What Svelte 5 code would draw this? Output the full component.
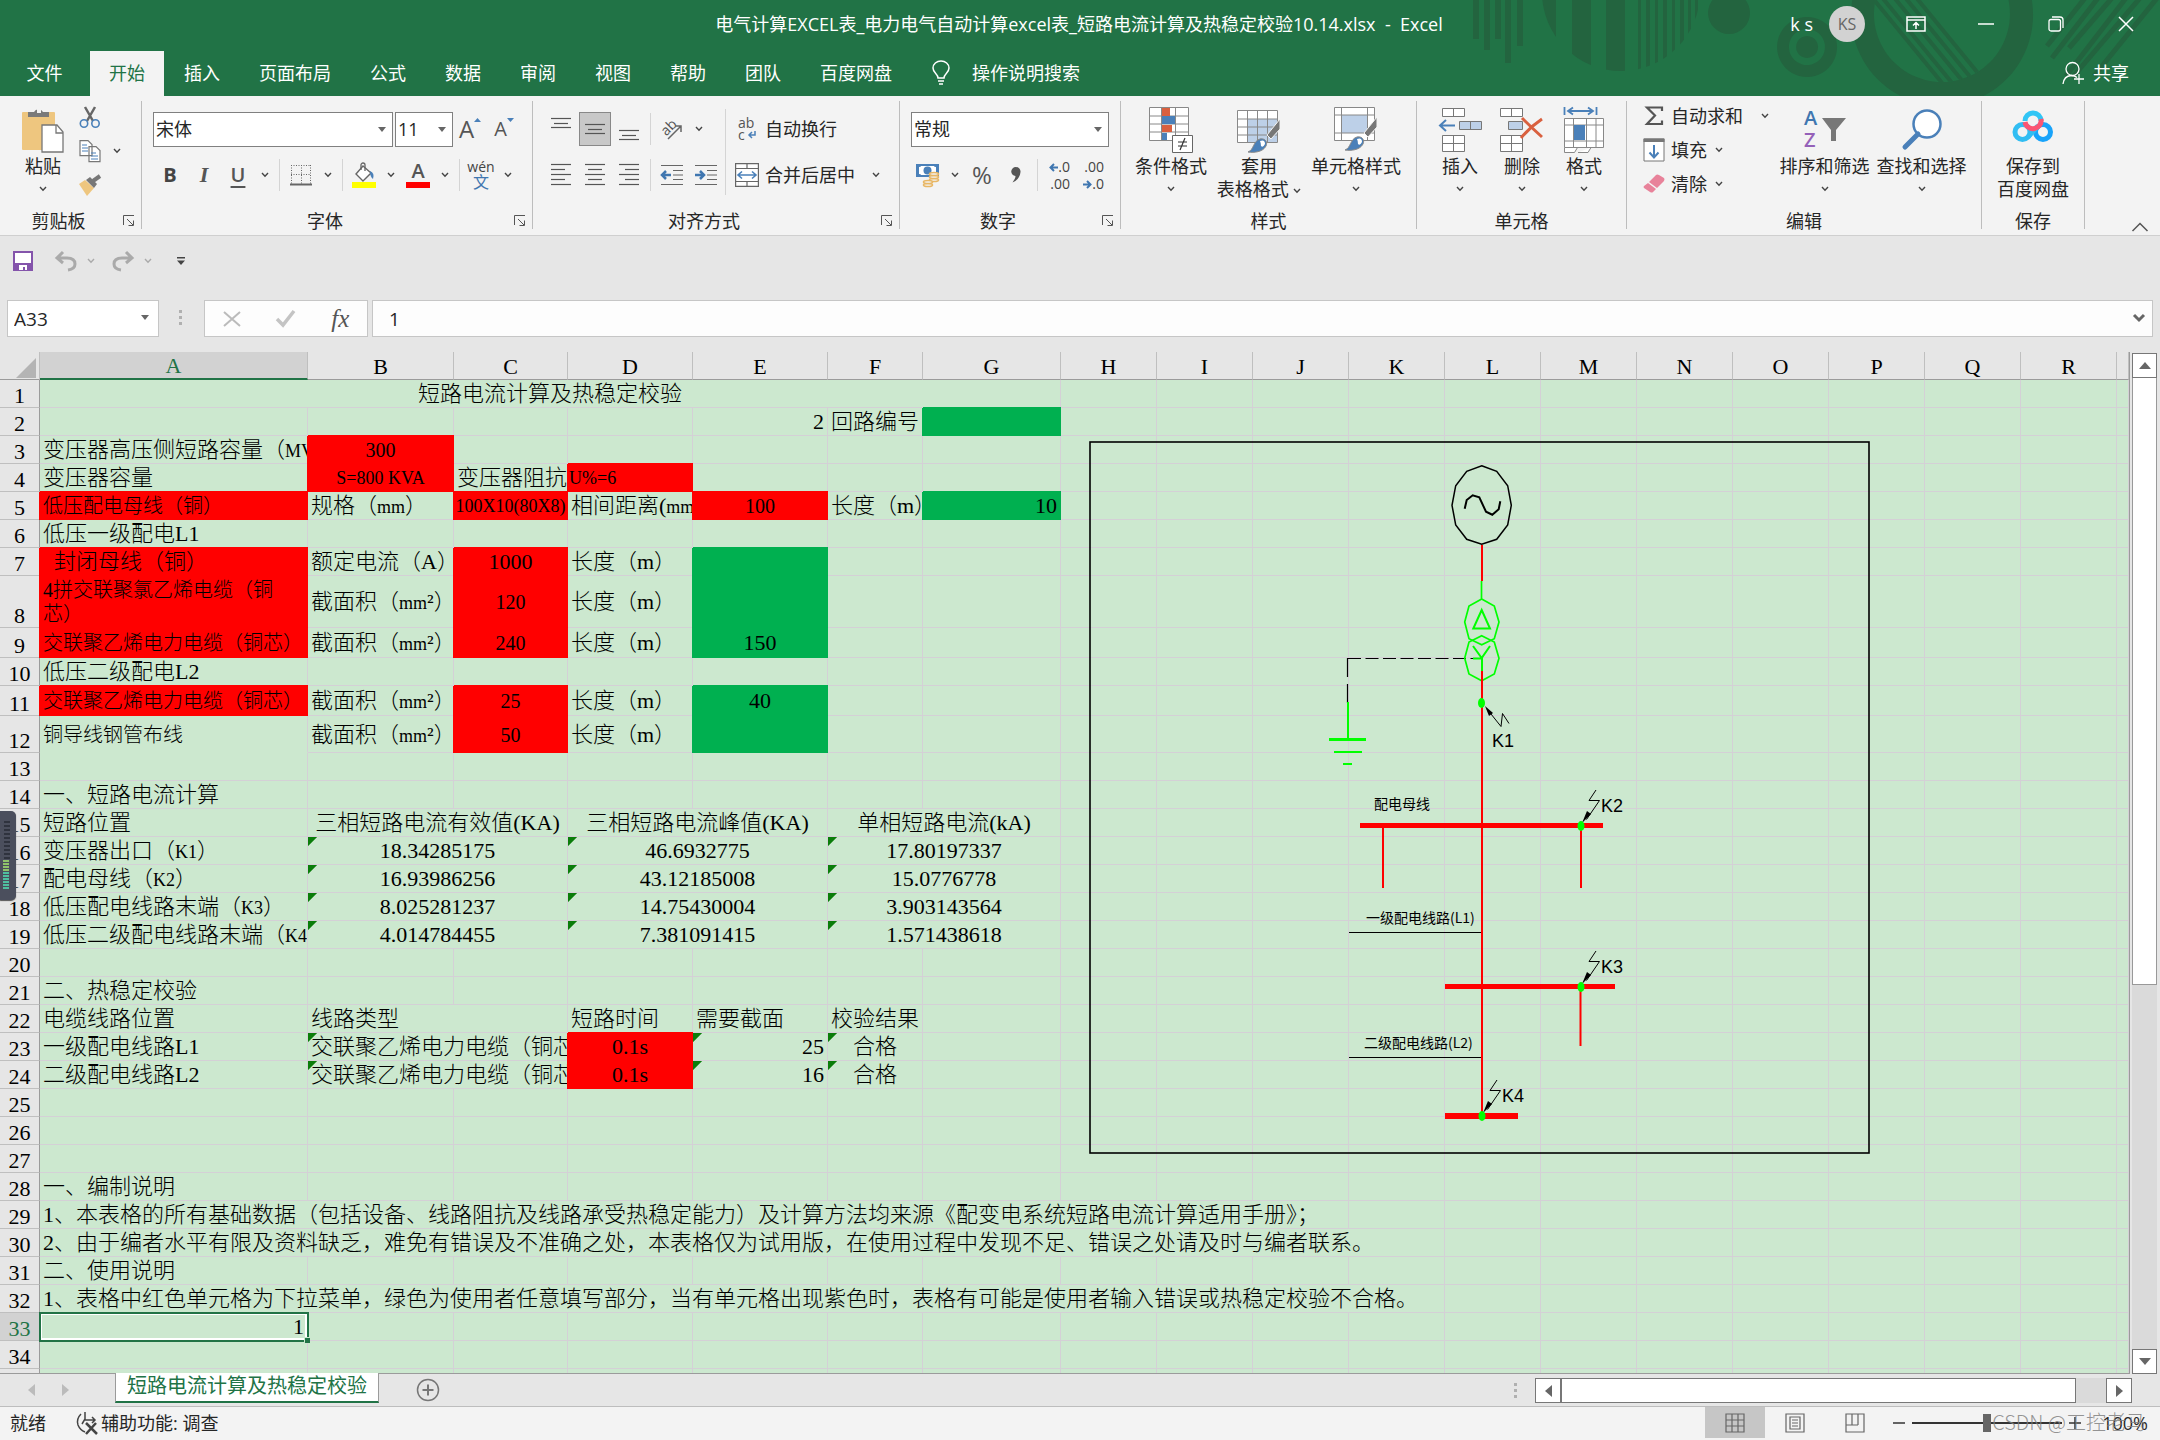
<script>
  const GREEN = 'green';
  const RED = 'red';

  const tabs = ['插入', '页面布局', '公式', '数据', '审阅', '视图', '帮助', '团队', '百度网盘'];
  const columns = [
    ['A', 268], ['B', 146], ['C', 114], ['D', 125], ['E', 135], ['F', 95], ['G', 138],
    ['H', 96], ['I', 96], ['J', 96], ['K', 96], ['L', 96], ['M', 96], ['N', 96],
    ['O', 96], ['P', 96], ['Q', 96], ['R', 96]
  ];
  const tall = { 8: 52, 9: 30, 11: 30, 12: 37 };

  // text, fill, align, span, small, err (green corner), open (no bottom line)
  const cells = {
    A1: { t: '短路电流计算及热稳定校验', span: 7, align: 'center' },
    E2: { t: '2', align: 'right' },
    F2: { t: '回路编号' },
    G2: { fill: GREEN },
    A3: { t: '变压器高压侧短路容量（MVA）' },
    B3: { t: '300', fill: RED, align: 'center', small: true },
    A4: { t: '变压器容量' },
    B4: { t: 'S=800 KVA', fill: RED, align: 'center', fit: true },
    C4: { t: '变压器阻抗' },
    D4: { t: 'U%=6', fill: RED, fit: true, tight: true },
    A5: { t: '低压配电母线（铜）', fill: RED, small: true },
    B5: { t: '规格（mm）' },
    C5: { t: '100X10(80X8)', fill: RED, align: 'center', fit: true, tight: true },
    D5: { t: '相间距离(mm)' },
    E5: { t: '100', fill: RED, align: 'center', small: true },
    F5: { t: '长度（m）' },
    G5: { t: '10', fill: GREEN, align: 'right' },
    A6: { t: '低压一级配电L1' },
    A7: { t: '\u00a0\u00a0封闭母线（铜）', fill: RED },
    B7: { t: '额定电流（A）' },
    C7: { t: '1000', fill: RED, align: 'center' },
    D7: { t: '长度（m）' },
    E7: { fill: GREEN },
    A8: { t: '4拼交联聚氯乙烯电缆（铜芯）', fill: RED, small: true, wrap: true },
    B8: { t: '截面积（mm²）' },
    C8: { t: '120', fill: RED, align: 'center', small: true },
    D8: { t: '长度（m）' },
    E8: { fill: GREEN },
    A9: { t: '交联聚乙烯电力电缆（铜芯）', fill: RED, small: true },
    B9: { t: '截面积（mm²）' },
    C9: { t: '240', fill: RED, align: 'center', small: true },
    D9: { t: '长度（m）' },
    E9: { t: '150', fill: GREEN, align: 'center' },
    A10: { t: '低压二级配电L2' },
    A11: { t: '交联聚乙烯电力电缆（铜芯）', fill: RED, small: true },
    B11: { t: '截面积（mm²）' },
    C11: { t: '25', fill: RED, align: 'center', small: true },
    D11: { t: '长度（m）' },
    E11: { t: '40', fill: GREEN, align: 'center' },
    A12: { t: '铜导线钢管布线', small: true, open: true },
    B12: { t: '截面积（mm²）' },
    C12: { t: '50', fill: RED, align: 'center', small: true },
    D12: { t: '长度（m）' },
    E12: { fill: GREEN },
    A14: { t: '一、短路电流计算' },
    A15: { t: '短路位置' },
    B15: { t: '三相短路电流有效值(KA)', span: 2, align: 'center' },
    D15: { t: '三相短路电流峰值(KA)', span: 2, align: 'center' },
    F15: { t: '单相短路电流(kA)', span: 2, align: 'center' },
    A16: { t: '变压器出口（K1）' },
    B16: { t: '18.34285175', span: 2, align: 'center', err: true },
    D16: { t: '46.6932775', span: 2, align: 'center', err: true },
    F16: { t: '17.80197337', span: 2, align: 'center', err: true },
    A17: { t: '配电母线（K2）' },
    B17: { t: '16.93986256', span: 2, align: 'center', err: true },
    D17: { t: '43.12185008', span: 2, align: 'center', err: true },
    F17: { t: '15.0776778', span: 2, align: 'center', err: true },
    A18: { t: '低压配电线路末端（K3）' },
    B18: { t: '8.025281237', span: 2, align: 'center', err: true },
    D18: { t: '14.75430004', span: 2, align: 'center', err: true },
    F18: { t: '3.903143564', span: 2, align: 'center', err: true },
    A19: { t: '低压二级配电线路末端（K4）' },
    B19: { t: '4.014784455', span: 2, align: 'center', err: true },
    D19: { t: '7.381091415', span: 2, align: 'center', err: true },
    F19: { t: '1.571438618', span: 2, align: 'center', err: true },
    A21: { t: '二、热稳定校验' },
    A22: { t: '电缆线路位置' },
    B22: { t: '线路类型', span: 2 },
    D22: { t: '短路时间' },
    E22: { t: '需要截面' },
    F22: { t: '校验结果' },
    A23: { t: '一级配电线路L1' },
    B23: { t: '交联聚乙烯电力电缆（铜芯）', span: 2, err: true },
    D23: { t: '0.1s', fill: RED, align: 'center' },
    E23: { t: '25', align: 'right', err: true },
    F23: { t: '合格', align: 'center', err: true },
    A24: { t: '二级配电线路L2' },
    B24: { t: '交联聚乙烯电力电缆（铜芯）', span: 2, err: true },
    D24: { t: '0.1s', fill: RED, align: 'center' },
    E24: { t: '16', align: 'right', err: true },
    F24: { t: '合格', align: 'center', err: true },
    A28: { t: '一、编制说明' },
    A29: { t: '1、本表格的所有基础数据（包括设备、线路阻抗及线路承受热稳定能力）及计算方法均来源《配变电系统短路电流计算适用手册》；', span: 10 },
    A30: { t: '2、由于编者水平有限及资料缺乏，难免有错误及不准确之处，本表格仅为试用版，在使用过程中发现不足、错误之处请及时与编者联系。', span: 11 },
    A31: { t: '二、使用说明' },
    A32: { t: '1、表格中红色单元格为下拉菜单，绿色为使用者任意填写部分，当有单元格出现紫色时，表格有可能是使用者输入错误或热稳定校验不合格。', span: 11 },
    A33: { t: '1', align: 'right', selected: true }
  };

  function buildRow(n) {
    const out = [];
    for (let i = 0; i < columns.length; ) {
      const cell = cells[columns[i][0] + n] ?? {};
      out.push(cell);
      i += cell.span ?? 1;
    }
    out.push({});
    return { n, height: tall[n] ?? 28, cells: out };
  }
  const rows = Array.from({ length: 35 }, (_, i) => buildRow(i + 1));

  // wide units and labels are set a little smaller than the text round them
  const runs = (text) => text.split(/(mm|MVA|K[1-4])/).filter(Boolean);
  const isUnit = (s) => /^(mm|MVA|K[1-4])$/.test(s);

  // short-circuit points: node position on the one-line diagram
  const faults = [
    { name: 'K2', x: 1581, y: 826 },
    { name: 'K3', x: 1581, y: 987 },
    { name: 'K4', x: 1482, y: 1116 }
  ];

  let formula = $state('1');
  let cellName = $state('A33');
  let zoom = $state(50);
</script>

{#snippet chev()}
  <svg class="chev" viewBox="0 0 8 6"><path d="M1 1l3 3.2L7 1" fill="none" stroke="currentColor" stroke-width="1.4" /></svg>
{/snippet}

{#snippet more(label)}
  <button class="cv" aria-label={label}>{@render chev()}</button>
{/snippet}

{#snippet caption(text, launcher)}
  <div class="caption">
    <span>{text}</span>
    {#if launcher}
      <button class="launcher" aria-label="{text}设置">
        <svg width="12" height="12" viewBox="0 0 12 12" fill="none" stroke="#555"><path d="M.5 10V.5H11M4 4l6 6M10.500 5.500v5h-5" /></svg>
      </button>
    {/if}
  </div>
{/snippet}

{#snippet lines(list)}
  <svg width="22" height="24" viewBox="0 0 22 24" stroke="#555" stroke-width="1.200">
    {#each list as [x1, x2, y]}<path d="M{x1} {y}.5H{x2}" />{/each}
  </svg>
{/snippet}

<div class="app">
  <header class="title-area">
    <svg class="decor" width="720" height="96" viewBox="0 0 720 96" fill="#23643f" aria-hidden="true">
      <defs>
        <clipPath id="disc"><circle cx="181" cy="-8" r="79" /></clipPath>
        <clipPath id="hole"><circle cx="502" cy="14" r="68" /></clipPath>
      </defs>
      <path d="M33 0h6v39h-6zM44 0h6v50h-6zM55 0h6v39h-6zM65 0h6v63h-6zM77 0h6v46h-6z" />
      <g clip-path="url(#disc)">
        <path d="M102 0h14v60h-14zM132 0h19v80h-19zM166 0h19v80h-19zM198 0h3v80h-3zM206 0h4v80h-4zM215 0h3v80h-3zM223 0h4v80h-4zM232 0h3v80h-3zM240 0h4v80h-4zM248 0h3v80h-3zM255 0h3v80h-3z" />
      </g>
      <circle cx="289" cy="13" r="21" />
      <path fill-rule="evenodd" d="M367 17a30 30 0 1 0 .1 0zM367 29a18 18 0 1 1-.1 0zM367 36a11 11 0 1 0 .1 0z" />
      <path fill-rule="evenodd" d="M502-76a91 91 0 1 0 .1 0zM502-54a68 68 0 1 1-.1 0z" />
      <g clip-path="url(#hole)" stroke="#23643f" stroke-width="4">
        <path d="M426-10l90 110M436-10l90 110M448-10l90 110M459-10l90 110M470-10l90 110" />
      </g>
      <g stroke="#23643f" stroke-width="5" fill="none">
        <path d="M645-2l-38 48M658-2l-46 60M672-2l-43 50M686-2l-60 78M700-2l-68 80M722-8l-68 84" />
      </g>
    </svg>

    <div class="title-bar">
      <h1>电气计算EXCEL表_电力电气自动计算excel表_短路电流计算及热稳定校验10.14.xlsx&nbsp; -&nbsp; Excel</h1>
      <div class="window-tools">
        <span class="user">k s</span>
        <span class="avatar">KS</span>
        <button aria-label="功能区显示选项"><svg width="20" height="16" viewBox="0 0 20 16" fill="none" stroke="#fff" stroke-width="1.500"><path d="M1 1h18v14H1zM1 4h18M10 13V7M7 9.500l3-3 3 3" /></svg></button>
        <button aria-label="最小化"><svg width="16" height="16" viewBox="0 0 16 16" stroke="#fff" stroke-width="1.500"><path d="M0 8h16" /></svg></button>
        <button aria-label="还原"><svg width="16" height="16" viewBox="0 0 16 16" fill="none" stroke="#fff" stroke-width="1.300"><rect x="1" y="3.500" width="11.500" height="11.500" rx="2" /><path d="M4 1h8q3 0 3 3v8" /></svg></button>
        <button aria-label="关闭"><svg width="16" height="16" viewBox="0 0 16 16" stroke="#fff" stroke-width="1.500"><path d="M1 1l14 14M15 1L1 15" /></svg></button>
      </div>
    </div>

    <nav class="tabs" aria-label="功能区">
      <button class="tab file">文件</button>
      <button class="tab active">开始</button>
      {#each tabs as tab}
        <button class="tab">{tab}</button>
      {/each}
      <button class="tab tell">
        <svg width="20" height="26" viewBox="0 0 20 26" fill="none" stroke="#fff" stroke-width="1.500"><path d="M7 18c0-4-5-5-5-10a8 7 0 0 1 16 0c0 5-5 6-5 10zM7 21h6M8 24h4" /></svg>
        操作说明搜索
      </button>
      <button class="tab share">
        <svg width="23" height="24" viewBox="0 0 23 24" fill="none" stroke="#fff" stroke-width="1.300"><circle cx="10.500" cy="8" r="6.500" /><path d="M1 23q1-8 8-8.500 4 0 6 2M17 13v10M12 18h10" /></svg>
        共享
      </button>
    </nav>
  </header>

  <section class="ribbon">
    <div class="group clipboard">
      <div class="tools">
        <button class="big">
          <svg width="42" height="46" viewBox="0 0 42 46"><rect x="0" y="5" width="33" height="38" rx="1" fill="#eec67f" /><path d="M6 10V5h6a5 5 0 0 1 9 0h6v5z" fill="#7a7a7a" /><rect x="15" y="2" width="4" height="4" fill="#f3f3f3" /><path d="M20 18h15l6 7v20H20z" fill="#fff" stroke="#777" stroke-width="1.300" /><path d="M34 18v8h7" fill="none" stroke="#777" stroke-width="1.300" /></svg>
          <span>粘贴</span>{@render chev()}
        </button>
        <div class="clip-side">
          <button class="ib" aria-label="剪切"><svg width="22" height="22" viewBox="0 0 22 22" fill="none"><path d="M6 1l8 14M16 1L8 15" stroke="#666" stroke-width="2.500" /><circle cx="5" cy="17.500" r="3.700" stroke="#4a80b9" stroke-width="1.600" /><circle cx="16.500" cy="17.500" r="3.700" stroke="#4a80b9" stroke-width="1.600" /></svg></button>
          <div class="line"><button class="ib" aria-label="复制"><svg width="22" height="22" viewBox="0 0 22 22" fill="#fff" stroke="#777" stroke-width="1.200"><path d="M1 .6h8l4 4v11H1zM10 6.600h7l4 4v11H10z" /><path d="M3 5h5M3 8h6M3 11h6M12 13h5M12 16h7M12 19h7" stroke="#4a80b9" /></svg></button>{@render more('复制选项')}</div>
          <button class="ib" aria-label="格式刷"><svg width="24" height="21" viewBox="0 0 24 21"><path d="M1 9l6-4 9 8-7 8z" fill="#eec67f" /><path d="M8 5l4-3 7 7-3 4z" fill="#777" /><path d="M15 6l7-5" stroke="#777" stroke-width="4" /></svg></button>
        </div>
      </div>
      {@render caption('剪贴板', true)}
    </div>

    <div class="group font">
      <div class="tools rows">
        <div class="line">
          <span class="select font-name"><select aria-label="字体"><option>宋体</option></select><i></i></span>
          <span class="select font-size"><select aria-label="字号"><option>11</option></select><i></i></span>
          <button class="ib glyph" aria-label="增大字号">A<svg class="raise" width="7" height="5" viewBox="0 0 7 5"><path d="M0 4l3.500-4L7 4z" fill="#4a80b9" /></svg></button>
          <button class="ib glyph less" aria-label="减小字号">A<svg class="raise" width="7" height="5" viewBox="0 0 7 5"><path d="M0 0h7L3.500 4z" fill="#4a80b9" /></svg></button>
        </div>
        <div class="line">
          <button class="ib glyph b">B</button>
          <button class="ib glyph i">I</button>
          <button class="ib glyph u">U</button>
          {@render more('下划线')}
          <i class="vs"></i>
          <button class="ib" aria-label="边框"><svg width="22" height="22" viewBox="0 0 22 22" fill="none" stroke="#666"><path d="M1.500 1v19M11.500 1v19M20.500 1v19M1 1.500h19M1 10.500h19" stroke-dasharray="1 1.500" /><path d="M0 20.500h22" stroke-width="2" /></svg></button>
          {@render more('边框样式')}
          <i class="vs"></i>
          <button class="ib" aria-label="填充颜色"><svg width="26" height="26" viewBox="0 0 26 26" fill="none"><path d="M12 4l8 7-8 8-7-7z" fill="#fff" stroke="#666" stroke-width="1.400" /><path d="M10 8V3a2 2 0 0 1 4 0v6" stroke="#666" stroke-width="1.300" /><path d="M19 9q5 2 3 8-3-2-3-8z" fill="#4a80b9" /><path d="M1 20h24v6H1z" fill="#ff0" /></svg></button>
          {@render more('填充颜色选项')}
          <button class="ib glyph color" aria-label="字体颜色">A<i></i></button>
          {@render more('字体颜色选项')}
          <i class="vs"></i>
          <button class="ib pinyin"><span>wén</span><span>文</span></button>
          {@render more('拼音选项')}
        </div>
      </div>
      {@render caption('字体', true)}
    </div>

    <div class="group align">
      <div class="tools">
        <div class="rows">
          <div class="line">
            <button class="ib" aria-label="顶端对齐">{@render lines([[1, 21, 1], [4, 18, 6], [1, 21, 10]])}</button>
            <button class="ib pressed" aria-label="垂直居中">{@render lines([[1, 21, 7], [4, 18, 12], [1, 21, 16]])}</button>
            <button class="ib" aria-label="底端对齐">{@render lines([[1, 21, 13], [4, 18, 18], [1, 21, 22]])}</button>
            <i class="vs"></i>
            <button class="ib" aria-label="方向"><svg width="22" height="22" viewBox="0 0 22 22"><text x="0" y="14" transform="rotate(-45 8 10)" class="ab">ab</text><path d="M7 21L20 8M14 8h6v6" fill="none" stroke="#666" stroke-width="1.500" /></svg></button>
            {@render more('方向选项')}
          </div>
          <div class="line">
            <button class="ib" aria-label="左对齐">{@render lines([[1, 21, 1], [1, 15, 6], [1, 21, 11], [1, 15, 16], [1, 21, 21]])}</button>
            <button class="ib" aria-label="居中">{@render lines([[1, 21, 1], [4, 18, 6], [1, 21, 11], [4, 18, 16], [1, 21, 21]])}</button>
            <button class="ib" aria-label="右对齐">{@render lines([[1, 21, 1], [7, 21, 6], [1, 21, 11], [7, 21, 16], [1, 21, 21]])}</button>
            <i class="vs"></i>
            {#each ['减少缩进量', '增加缩进量'] as name, i}
              <button class="ib" aria-label={name}><svg width="22" height="22" viewBox="0 0 22 22" fill="none" stroke="#666" stroke-width="1.200"><path d="M0 1.500h22M12 6.500h10M12 11h10M12 15.500h10M0 20.500h22" />{#if i}<path d="M0 11h8M5 7l4 4-4 4" stroke="#3f76b0" stroke-width="2.500" />{:else}<path d="M10 11H2M5 7l-4 4 4 4" stroke="#3f76b0" stroke-width="2.500" />{/if}</svg></button>
            {/each}
          </div>
        </div>
        <i class="vs long"></i>
        <div class="rows wide">
          <button class="line text"><svg width="24" height="28" viewBox="0 0 24 28"><text x="3" y="13" class="ab">ab</text><text x="3" y="25" class="ab">c</text><path d="M20 16v4h-6M17 17l-3 3 3 3" fill="none" stroke="#4a80b9" stroke-width="1.500" /></svg>自动换行</button>
          <div class="line"><button class="line text"><svg width="24" height="24" viewBox="0 0 24 24" fill="#fff" stroke="#666" stroke-width="1.200"><path d="M.6.6h22.800v22.800H.6zM.6 5.500h22.800M.6 18.500h22.800M12 .6v5M12 18.500v5" /><path d="M3 12h18M7 8.500L3 12l4 3.500M17 8.500l4 3.500-4 3.500" fill="none" stroke="#4a80b9" stroke-width="1.600" /></svg>合并后居中</button>{@render more('合并选项')}</div>
        </div>
      </div>
      {@render caption('对齐方式', true)}
    </div>

    <div class="group number">
      <div class="tools rows">
        <div class="line"><span class="select format"><select aria-label="数字格式"><option>常规</option></select><i></i></span></div>
        <div class="line">
          <button class="ib" aria-label="会计数字格式"><svg width="26" height="24" viewBox="0 0 26 24"><rect x="1" y="1" width="23" height="13" fill="#4a80b9" /><path d="M4 4q2 0 2-1h13q0 1 2 1v7q-2 0-2 1H6q0-1-2-1z" fill="#fff" /><circle cx="12.500" cy="7.500" r="4" fill="#4a80b9" /><g fill="#f3f3f3" stroke="#e8b765" stroke-width="1.600"><ellipse cx="19" cy="17" rx="4.500" ry="1.500" /><ellipse cx="19" cy="14" rx="4.500" ry="1.500" /><ellipse cx="19" cy="11" rx="4.500" ry="1.500" /><ellipse cx="13" cy="22" rx="4.500" ry="1.500" /><ellipse cx="13" cy="19" rx="4.500" ry="1.500" /></g></svg></button>
          {@render more('会计格式选项')}
          <button class="ib glyph percent">%</button>
          <button class="ib glyph comma" aria-label="千位分隔样式"><svg width="10" height="16" viewBox="0 0 10 16"><path d="M5 0a4.500 4.500 0 0 1 4.500 5C9 11 5 14 1.500 15.500 3 13 4.500 11.500 4.500 9A4.500 4.500 0 0 1 5 0z" fill="#555" /></svg></button>
          <i class="vs"></i>
          <button class="ib decimals"><span><svg width="9" height="9" viewBox="0 0 9 9"><path d="M9 4.500H2M5 1L1.500 4.500 5 8" /></svg>.0</span><span>.00</span></button>
          <button class="ib decimals"><span>.00</span><span><svg width="9" height="9" viewBox="0 0 9 9"><path d="M0 4.500h7M4 1l3.500 3.500L4 8" /></svg>.0</span></button>
        </div>
      </div>
      {@render caption('数字', true)}
    </div>

    <div class="group styles">
      <div class="tools">
        <button class="big">
          <svg width="44" height="46" viewBox="0 0 44 46" fill="#fff" stroke="#888"><path d="M.5.5h39v33H.500zM.5 9h39M.5 17h39M.5 25h39M12.500.5v33M26.500.5v33" /><path d="M13 1h8v8h-8zM13 18h10v7H13z" fill="#d9603f" stroke="none" /><path d="M13 9h13v8H13zM13 26h5v7h-5z" fill="#4a80b9" stroke="none" /><path d="M23.500 28.500h20v17h-20z" stroke="#666" /><path d="M29 35h9M29 39h9M36 31l-5 12" stroke="#333" stroke-width="1.200" /></svg>
          <span>条件格式</span>{@render chev()}
        </button>
        <button class="big">
          <svg width="44" height="46" viewBox="0 0 44 46" fill="none" stroke="#888"><path d="M.5 3.500h40v32H.500z" fill="#fff" /><path d="M10 12h30v23H10z" fill="#bdd0e8" stroke="none" /><path d="M.5 12h40M.5 20h40M.5 28h40M10.500 3.500v32M20.500 3.500v32M30.500 3.500v32" /><path d="M43 12v10L34 32l-4-4z" fill="#777" stroke="#f3f3f3" /><path d="M11 45c6-2 5-11 12-13 5-1 8 3 6 7-3 6-12 7-18 6z" fill="#4a80b9" /><path d="M23 34q5-2 5 3-2 4-4 2 0-3-1-5z" fill="#fff" stroke="none" /></svg>
          <span>套用<br />表格格式 {@render chev()}</span>
        </button>
        <button class="big">
          <svg width="44" height="46" viewBox="0 0 44 46" fill="none" stroke="#888"><path d="M.5.500h40v33H.500z" fill="#fff" /><path d="M8 8h25v18H8z" fill="#bdd0e8" stroke="none" /><path d="M.5 8h40M.5 26h40M7.500.5v33M33.500.5v33" /><path d="M43 10v10L34 30l-4-4z" fill="#777" stroke="#f3f3f3" /><path d="M11 43c6-2 5-11 12-13 5-1 8 3 6 7-3 6-12 7-18 6z" fill="#4a80b9" /><path d="M23 32q5-2 5 3-2 4-4 2 0-3-1-5z" fill="#fff" stroke="none" /></svg>
          <span>单元格样式</span>{@render chev()}
        </button>
      </div>
      {@render caption('样式', false)}
    </div>

    <div class="group cells">
      <div class="tools">
        <button class="big">
          <svg width="44" height="46" viewBox="0 0 44 46" fill="#fff" stroke="#777"><path d="M4.500 1.500h22v8h-22zM15.500 1.500v8M4.500 28.500h22v16h-22zM15.500 28.500v16M4.500 36.500h22" /><path d="M21.500 14.500h22v8h-22zM32.500 14.500v8" fill="#bdd0e8" /><path d="M17 18.500H3M8 13l-6 5.500L8 24" fill="none" stroke="#4a80b9" stroke-width="2" /></svg>
          <span>插入</span>{@render chev()}
        </button>
        <button class="big">
          <svg width="44" height="46" viewBox="0 0 44 46" fill="#fff" stroke="#777"><path d="M.5 1.500h22v8H.500zM11.500 1.500v8M.5 28.500h22v16H.500zM11.500 28.500v16M.5 36.500h22" /><path d="M8.500 14.500h14v8h-14z" fill="#bdd0e8" /><path d="M22 11q10 10 20 19M42 12Q30 20 21 31" fill="none" stroke="#d9603f" stroke-width="3" /></svg>
          <span>删除</span>{@render chev()}
        </button>
        <button class="big">
          <svg width="42" height="46" viewBox="0 0 42 46" fill="#fff" stroke="#888"><path d="M1.500 11.500h39v29h-39zM1.500 18h39M1.500 34h39M10.500 11.500v29M23.500 11.500v29M33 11.500v29M1.500 40.500v5h10l3-5M15 45.500h10l3-5" /><path d="M11 18h11v15H11z" fill="#4a80b9" stroke="none" /><path d="M1.500 0v8M33.500 0v8M5 4h25M10 .5L5 4l5 3.500M25 .5L30 4l-5 3.500" fill="none" stroke="#4a80b9" stroke-width="1.800" /></svg>
          <span>格式</span>{@render chev()}
        </button>
      </div>
      {@render caption('单元格', false)}
    </div>

    <div class="group edit">
      <div class="tools">
        <div class="edit-list">
          <button class="line text sum"><svg width="22" height="22" viewBox="0 0 22 22" fill="none" stroke="#555" stroke-width="2.200"><path d="M19 6V2.500H4l8 8-8 8.500h15v-3.500" /></svg>自动求和 {@render chev()}</button>
          <button class="line text"><svg width="22" height="24" viewBox="0 0 22 24"><path d="M1 1h20v22H1z" fill="#fff" stroke="#777" /><path d="M.5.500h21V4H.500z" fill="#777" /><path d="M11 7v12M6.500 14.500l4.500 5 4.500-5" fill="none" stroke="#4a80b9" stroke-width="2" /></svg>填充 {@render chev()}</button>
          <button class="line text"><svg width="22" height="20" viewBox="0 0 22 20"><path d="M13 1q1-1 3 0l5 3q1 1 0 3l-7 7-8-6zM5 9l8 6-3 3q-1 1-3 0l-6-4q-1-1 0-2z" fill="#e8829a" /></svg>清除 {@render chev()}</button>
        </div>
        <button class="big">
          <svg width="44" height="46" viewBox="0 0 44 46"><text x="1" y="18" class="az">A</text><text x="1" y="40" class="az z">Z</text><path d="M19 11h24L33 23v11l-5 0V23z" fill="#777" /></svg>
          <span>排序和筛选</span>{@render chev()}
        </button>
        <button class="big">
          <svg width="42" height="46" viewBox="0 0 42 46" fill="none" stroke="#4a80b9"><circle cx="26" cy="17" r="13.500" fill="#fff" stroke-width="2.500" /><path d="M17 27L4 40" stroke-width="5" stroke-linecap="round" /></svg>
          <span>查找和选择</span>{@render chev()}
        </button>
      </div>
      {@render caption('编辑', false)}
    </div>

    <div class="group save">
      <div class="tools">
        <button class="big">
          <svg width="42" height="46" viewBox="0 0 42 46" fill="none" stroke-width="5"><circle cx="10.500" cy="25" r="7.500" stroke="#31bdf2" /><circle cx="31" cy="25" r="7.500" stroke="#18a3fa" /><path d="M16 30L26 19" stroke="#31bdf2" /><path d="M13 14a8 8 0 0 1 16 0" stroke="#31c5f5" /><path d="M29 12a8 8 0 1 1-16 3" stroke="#fb5573" /></svg>
          <span>保存到<br />百度网盘</span>
        </button>
      </div>
      {@render caption('保存', false)}
    </div>

    <button class="collapse" aria-label="折叠功能区"><svg width="18" height="10" viewBox="0 0 18 10" fill="none" stroke="#555" stroke-width="1.500"><path d="M1.500 9L9 1.500 16.500 9" /></svg></button>
  </section>

  <div class="quick">
    <button aria-label="保存"><svg width="20" height="20" viewBox="0 0 20 20"><path d="M1 1h18v18H1z" fill="#fff" stroke="#8454ab" stroke-width="2" /><path d="M1 12h18v7H1z" fill="#8454ab" /><path d="M6 14h8v5h-2v-3h-2v3H6z" fill="#fff" /></svg></button>
    <button class="undo" aria-label="撤消"><svg width="24" height="20" viewBox="0 0 24 20" fill="none" stroke="#aaa" stroke-width="3"><path d="M9 1L3 7l6 5M3 7h10q8 0 8 6 0 5-7 6" /></svg></button>
    {@render more('撤消列表')}
    <button class="undo" aria-label="恢复"><svg width="24" height="20" viewBox="0 0 24 20" fill="none" stroke="#aaa" stroke-width="3"><path d="M15 1l6 6-6 5M21 7H11q-8 0-8 6 0 5 7 6" /></svg></button>
    {@render more('恢复列表')}
    <button class="custom" aria-label="自定义快速访问工具栏"><svg width="8" height="8" viewBox="0 0 8 8" fill="#444"><path d="M0 0h8v1.500H0zM0 3.500h8L4 8z" /></svg></button>
  </div>

  <div class="formula-bar">
    <span class="name-box"><input aria-label="名称框" bind:value={cellName} /><i></i></span>
    <span class="dots"></span>
    <div class="fx">
      <button aria-label="取消"><svg width="18" height="16" viewBox="0 0 18 16" stroke="#bbb" stroke-width="2"><path d="M1 1l16 14M17 1L1 15" /></svg></button>
      <button aria-label="输入"><svg width="20" height="17" viewBox="0 0 20 17" fill="none" stroke="#c4c4c4" stroke-width="3.500"><path d="M1 9l6 6L18 1" /></svg></button>
      <button class="fn">fx</button>
    </div>
    <div class="formula">
      <input aria-label="编辑栏" bind:value={formula} />
      <svg width="12" height="9" viewBox="0 0 12 9" fill="none" stroke="#666" stroke-width="3"><path d="M1 1l5 5 5-5" /></svg>
    </div>
  </div>

  <main class="sheet-area">
    <div class="sheet">
      <table>
        <colgroup>
          <col style="width: 40px" />
          {#each columns as [, width]}<col style="width: {width}px" />{/each}
          <col />
        </colgroup>
        <thead>
          <tr>
            <th class="corner"><svg width="20" height="20" viewBox="0 0 20 20"><path d="M20 0v20H0z" fill="#b4b4b4" /></svg></th>
            {#each columns as [name]}
              <th scope="col" class:current={name === 'A'}>{name}</th>
            {/each}
            <th></th>
          </tr>
        </thead>
        <tbody>
          {#each rows as row (row.n)}
            <tr style="height: {row.height}px">
              <th scope="row" class:current={row.n === 33}>{row.n < 35 ? row.n : ''}</th>
              {#each row.cells as cell}
                <td
                  class="{cell.fill ?? ''} {cell.align ?? ''}"
                  class:small={cell.small}
                  class:fit={cell.fit}
                  class:wrap={cell.wrap}
                  class:tight={cell.tight}
                  class:err={cell.err}
                  class:open={cell.open}
                  class:selected={cell.selected}
                  colspan={cell.span ?? 1}
                >{#if cell.t}{#each runs(cell.t) as run}{#if isUnit(run)}<span class="unit">{run}</span>{:else}{run}{/if}{/each}{/if}</td>
              {/each}
            </tr>
          {/each}
        </tbody>
      </table>

      <svg class="diagram" width="781" height="713" viewBox="1089 441 781 713" fill="none" stroke="#000" role="img" aria-label="配电系统图">
        <rect x="1090" y="442" width="779" height="711" stroke-width="1.600" />
        <path d="M1481.700 465.700l15 5.600 11 14.400 3.600 19.600-3.600 19.700-11 14.300-15 5-15-5-11-14.300-3.700-19.700 3.700-19.600 11-14.400z" stroke-width="1.500" />
        <path d="M1464.700 508.700l2-8.700 6-4.700 6.600 2 6.700 14.400 6.300 3 6.400-5.400 1.600-8" stroke-width="2" />
        <path d="M1347.500 703v-44.500H1473" stroke-width="1.200" stroke-dasharray="19 7 19 0 13 4.500 13 4.500 13 4.500 13 4.500 13 4.500 13 4.500 13 4.500 13 4.500" />
        <g stroke="#0f0" stroke-width="1.700">
          <path d="M1481.500 581v18M1481.700 599l12.600 7 4.700 16-4.700 16.700-12.600 6-12.700-6-4.300-16.700 4.300-16z" />
          <path d="M1481.700 635.700l12.600 6.300 4.700 16.300-4.700 15.700-12.600 6.700-12.700-6.700-4.300-15.700 4.300-16.300z" />
          <path d="M1481.700 610l-8.400 18.500h16.700zM1473 646l8.700 12 8.300-12M1473 658.500h9v13M1348 702v37" stroke-width="2" />
          <path d="M1329 739.500h37" stroke-width="3" />
          <path d="M1334 752h28M1343 764h9" stroke-width="2" />
        </g>
        <g stroke="#f00" stroke-width="2">
          <path d="M1482 545v36M1482 671v445M1383 826v62M1581 826v62M1580.500 987v59" />
          <path d="M1360 825.500h243M1445 986.500h170" stroke-width="5" />
          <path d="M1445 1116h73" stroke-width="6" />
        </g>
        <path d="M1349 932.500h132M1349 1057.500h132" />
        <path d="M1487 709l14 17.500 1.500-13 6.500 10" />
        <path d="M1485 706l4 10 4-3z" fill="#000" stroke="none" />
        <ellipse cx="1481.500" cy="703" rx="3.500" ry="5" fill="#0f0" stroke="none" />
        {#each faults as f}
          <path d="M{f.x + 15} {f.y - 36}l-7 10.500h10.500l-13 19" />
          <path d="M{f.x + 1} {f.y - 3}l5-12 4 3z" fill="#000" stroke="none" />
          <ellipse cx={f.x} cy={f.y} rx="3.500" ry="5" fill="#0f0" stroke="none" />
          <text x={f.x + 20} y={f.y - 14}>{f.name}</text>
        {/each}
        <text x="1492" y="747">K1</text>
        <text x="1374" y="809" class="cn">配电母线</text>
        <text x="1366" y="923" class="cn">一级配电线路(L1)</text>
        <text x="1364" y="1048" class="cn">二级配电线路(L2)</text>
      </svg>

      <div class="meter" aria-hidden="true"></div>
    </div>

    <div class="vscroll">
      <button aria-label="向上滚动"><svg width="12" height="8" viewBox="0 0 12 8"><path d="M0 7l6-7 6 7z" fill="#666" /></svg></button>
      <div class="thumb"></div>
      <div class="track"></div>
      <button aria-label="向下滚动"><svg width="12" height="8" viewBox="0 0 12 8"><path d="M0 0h12L6 7z" fill="#666" /></svg></button>
    </div>
  </main>

  <div class="sheet-tabs">
    <div class="arrows">
      <button aria-label="上一张工作表"><svg width="7" height="12" viewBox="0 0 7 12"><path d="M7 0v12L0 6z" fill="#bbb" /></svg></button>
      <button aria-label="下一张工作表"><svg width="7" height="12" viewBox="0 0 7 12"><path d="M0 0v12l7-6z" fill="#bbb" /></svg></button>
    </div>
    <button class="sheet-tab">短路电流计算及热稳定校验</button>
    <button class="add" aria-label="新工作表"><svg width="24" height="24" viewBox="0 0 24 24" fill="none" stroke="#777" stroke-width="1.500"><circle cx="12" cy="12" r="10.500" /><path d="M12 6.500v11M6.500 12h11" stroke-width="2" /></svg></button>
    <span class="dots"></span>
    <div class="hscroll">
      <button aria-label="向左滚动"><svg width="7" height="12" viewBox="0 0 7 12"><path d="M7 0v12L0 6z" fill="#666" /></svg></button>
      <div class="thumb"></div>
      <button aria-label="向右滚动"><svg width="7" height="12" viewBox="0 0 7 12"><path d="M0 0v12l7-6z" fill="#666" /></svg></button>
    </div>
  </div>

  <footer class="status">
    <span>就绪</span>
    <button class="access">
      <svg width="22" height="22" viewBox="0 0 22 22" fill="none" stroke="#444" stroke-width="1.500"><path d="M5 2Q0 7 2 13q2 5 7 7M9 0v7l-3 5M9 8h10M16 5l3 3-3 3" /><path d="M10 11l11 11M20 11L10 22" stroke-width="2.500" /></svg>
      辅助功能: 调查
    </button>
    <div class="views">
      <button class="on" aria-label="普通"><svg width="20" height="20" viewBox="0 0 20 20" fill="none" stroke="#666" stroke-width="1.200"><path d="M1 1h18v18H1zM7 1v18M13 1v18M1 7h18M1 13h18" /></svg></button>
      <button aria-label="页面布局"><svg width="20" height="20" viewBox="0 0 20 20" fill="none" stroke="#666" stroke-width="1.200"><path d="M1 1h18v18H1zM5 4h10v12H5zM7 7h6M7 10h6M7 13h6" /></svg></button>
      <button aria-label="分页预览"><svg width="20" height="20" viewBox="0 0 20 20" fill="none" stroke="#666" stroke-width="1.200"><path d="M1 1h18v18H1zM7 1v11M13 1v11M1 12h12" /></svg></button>
    </div>
    <div class="zoom">
      <button aria-label="缩小"><svg width="12" height="12" viewBox="0 0 12 12" stroke="#333" stroke-width="1.500"><path d="M0 6h12" /></svg></button>
      <input type="range" min="0" max="100" aria-label="缩放" bind:value={zoom} />
      <button aria-label="放大"><svg width="12" height="12" viewBox="0 0 12 12" stroke="#333" stroke-width="1.500"><path d="M0 6h12M6 0v12" /></svg></button>
      <span class="percent">100%</span>
    </div>
    <span class="mark">CSDN @工控老马</span>
  </footer>
</div>

<style>
  :global(body) { margin: 0; }
  .app {
    height: 100vh;
    display: flex;
    flex-direction: column;
    overflow: hidden;
    background: #e6e6e6;
    color: #262626;
    font: 18px/24px "Open Sans", "Noto Sans CJK SC", sans-serif;
  }
  .app *, .app *::before, .app *::after { box-sizing: border-box; }
  button {
    padding: 0;
    border: 0;
    background: none;
    color: inherit;
    font: inherit;
    display: flex;
    align-items: center;
    justify-content: center;
    white-space: nowrap;
  }
  input, select { font: inherit; color: inherit; border: 0; outline: 0; }
  svg { flex: none; overflow: visible; }

  /* title */
  .title-area { position: relative; height: 96px; flex: none; background: #217346; color: #fff; }
  .decor { position: absolute; top: 0; right: 0; overflow: hidden; }
  .title-bar {
    position: relative;
    height: 51px;
    padding: 0 26px 4px 24px;
    display: grid;
    grid-template-columns: 1fr auto 1fr;
    align-items: center;
  }
  h1 { grid-column: 2; margin: 0; font-size: 18px; font-weight: 400; line-height: 24px; }
  .window-tools { display: flex; justify-content: flex-end; align-items: center; }
  .window-tools button { width: 70px; height: 46px; }
  .window-tools button:last-child { width: 16px; margin-left: 27px; }
  .user { margin-right: 16px; }
  .avatar {
    width: 36px;
    height: 36px;
    margin-right: 16px;
    border-radius: 50%;
    background: #d2d2d2;
    color: #666;
    font-size: 16px;
    line-height: 36px;
    text-align: center;
  }
  .tabs { position: relative; height: 45px; display: flex; gap: 1px; }
  .tab { padding: 0 19px 2px; }
  .file { width: 89px; }
  .active { background: #f3f3f3; color: #217346; }
  .tell { gap: 21px; }
  .share { margin-left: auto; padding-right: 31px; gap: 8px; }

  /* ribbon */
  .ribbon {
    height: 140px;
    flex: none;
    display: flex;
    background: #f3f3f3;
    border-bottom: 1px solid #cfcfcf;
  }
  .group {
    height: 128px;
    margin-top: 5px;
    display: flex;
    flex-direction: column;
    border-right: 1px solid #bdbdbd;
  }
  .clipboard { width: 142px; }
  .font { width: 391px; }
  .align { width: 367px; }
  .number { width: 221px; }
  .styles { width: 296px; }
  .cells { width: 210px; }
  .edit { width: 355px; }
  .save { width: 103px; }
  .tools { flex: 1; display: flex; }
  .font .tools, .align .tools, .number .tools { padding-left: 11px; }
  .styles .tools { padding-left: 8px; }
  .cells .tools { padding-left: 12px; }
  .edit .tools { padding-left: 16px; }
  .rows { display: flex; flex-direction: column; gap: 6px; padding-top: 8px; }
  .line { display: flex; align-items: center; height: 40px; }
  .text { gap: 6px; justify-content: flex-start; }
  .caption { height: 16px; display: flex; align-items: center; line-height: 16px; }
  .caption span { flex: 1; text-align: center; }
  .launcher { width: 24px; height: 16px; }
  .ib { position: relative; width: 34px; height: 34px; flex: none; }
  .cv { width: 20px; height: 34px; flex: none; }
  .chev { width: 8px; height: 6px; color: #444; }
  .vs { width: 1px; height: 32px; margin: 0 4px; background: #d4d4d4; flex: none; }
  .long { height: 86px; margin: 8px 9px 0 2px; }
  .wide .cv { margin-left: 11px; }
  .pressed { width: 32px; margin: 0 1px; background: #c8c8c8; border: 1px solid #888; }
  .ab { font: 14px "Open Sans", sans-serif; fill: #555; }

  .big { flex-direction: column; justify-content: flex-start; padding-top: 6px; line-height: 23px; }
  .big > svg:first-child { margin-bottom: 2px; }
  .big > .chev { margin-top: 8px; }
  .big .chev { vertical-align: middle; }
  .clipboard .big { width: 60px; margin-left: 13px; }
  .styles .big { width: 84px; }
  .styles .big:nth-child(2) { width: 92px; }
  .styles .big:nth-child(3) { width: 102px; }
  .cells .big { width: 62px; }
  .edit .big { width: 97px; }
  .save .big { width: 100%; }
  .clip-side .line { height: 36px; }
  .clip-side .ib:first-child, .clip-side .ib:last-child { height: 32px; }

  .select { position: relative; height: 35px; border: 1px solid #808080; background: #fff; }
  .select select { width: 100%; height: 100%; padding: 0 2px; appearance: none; background: none; }
  .select i, .name-box i {
    position: absolute;
    right: 6px;
    top: 14px;
    border: 4px solid transparent;
    border-top: 5px solid #666;
    border-bottom: 0;
    pointer-events: none;
  }
  .name-box i { right: 9px; }
  .font-name { width: 240px; margin-right: 2px; }
  .font-size { width: 58px; }
  .format { width: 198px; }

  .glyph { color: #555; font-size: 24px; }
  .less { font-size: 20px; }
  .raise { align-self: flex-start; margin-top: 6px; }
  .b { font-weight: 700; font-size: 20px; color: #444; }
  .i { font: italic 22px "Liberation Serif", serif; font-weight: 700; }
  .u { font-size: 20px; font-weight: 600; text-decoration: underline; text-underline-offset: 4px; }
  .color { font-size: 20px; font-weight: 600; padding-bottom: 8px; }
  .color i { position: absolute; left: 5px; bottom: 4px; width: 24px; height: 6px; background: #f00; }
  .pinyin { flex-direction: column; font-size: 14px; line-height: 14px; color: #444; }
  .pinyin span:last-child { color: #3f76b0; font-size: 16px; line-height: 16px; }
  .decimals { flex-direction: column; align-items: flex-end; padding-right: 6px; font-size: 14px; line-height: 17px; color: #444; }
  .decimals path { fill: none; stroke: #3f76b0; stroke-width: 2; }

  .edit-list { width: 133px; height: 102px; margin-top: -2px; }
  .edit-list .line { height: 34px; }
  .edit-list .chev { margin-left: 2px; }
  .edit-list .sum .chev { margin-left: 12px; }
  .az { font: 600 20px "Open Sans", sans-serif; fill: #3f76b0; }
  .z { fill: #9460b8; }
  .collapse { margin: auto 11px 3px auto; }

  /* quick access + formula bar */
  .quick { height: 64px; flex: none; display: flex; align-items: center; padding: 0 0 15px 13px; }
  .undo { width: 24px; margin-left: 21px; }
  .quick .cv { width: 18px; margin-left: 4px; }
  .quick .cv .chev { color: #aaa; }
  .quick .undo ~ .undo { margin-left: 11px; }
  .custom { margin-left: 20px; }
  .formula-bar { height: 37px; flex: none; display: flex; padding: 0 7px; margin-bottom: 15px; }
  .name-box { position: relative; width: 152px; background: #fff; border: 1px solid #c6c6c6; }
  .name-box input { width: 100%; height: 100%; padding: 0 6px; background: none; font-size: 19px; }
  .dots { width: 3px; height: 15px; background: repeating-linear-gradient(#b0b0b0 0 3px, transparent 3px 6px); }
  .formula-bar .dots { margin: 10px 22px 0 20px; }
  .fx, .formula { display: flex; align-items: center; background: #fdfdfd; border: 1px solid #c6c6c6; }
  .fx { width: 164px; justify-content: space-around; margin-right: 4px; }
  .fn { color: #555; font: italic 25px "Liberation Serif", serif; }
  .formula { flex: 1; padding-right: 7px; }
  .formula input { flex: 1; padding: 0 16px; background: none; font-size: 19px; }

  /* grid */
  .sheet-area { flex: 1; min-height: 0; display: flex; }
  .sheet {
    position: relative;
    flex: 1;
    min-width: 0;
    overflow: hidden;
    background: #cce8cf;
    border-right: 1px solid #9b9b9b;
    border-bottom: 1px solid #9b9b9b;
  }
  table {
    width: 100%;
    table-layout: fixed;
    border-collapse: separate;
    border-spacing: 0;
    font: 300 22px/22px "Liberation Serif", "Noto Sans CJK SC", serif;
    color: #000;
  }
  th { padding: 0; font-weight: 400; background: #e6e6e6; }
  thead th { height: 28px; padding-top: 2px; border-bottom: 1px solid #9b9b9b; border-right: 1px solid #bfbfbf; }
  tbody th { vertical-align: bottom; border-bottom: 1px solid #bfbfbf; border-right: 1px solid #9b9b9b; }
  thead .corner { padding: 4px 3px 0 0; text-align: right; line-height: 0; border-right: 1px solid #bfbfbf; }
  thead .current { background: #d2d2d2; color: #217346; border-bottom: 2px solid #217346; }
  tbody .current { background: #d2d2d2; color: #217346; }
  td {
    padding: 1px 3px 0;
    overflow: hidden;
    white-space: nowrap;
    border-right: 1px solid #d4d0d6;
    border-bottom: 1px solid #d4d0d6;
  }
  .unit { font-size: 18px; line-height: 20px; }
  .small { font-size: 20px; }
  .fit { font-size: 18px; }
  .center { text-align: center; }
  .right { text-align: right; }
  .wrap { padding-right: 16px; white-space: normal; line-height: 24px; }
  .tight { padding: 1px 1px 0; }
  .open { border-bottom-color: transparent; }
  .red, .green { position: relative; overflow: visible; }
  .red { background: #f00; border-color: #f00; box-shadow: -1px 0 #f00, 0 -1px #f00; }
  .green { background: #00b050; border-color: #00b050; box-shadow: -1px 0 #00b050, 0 -1px #00b050; }
  .err { background: linear-gradient(135deg, #0a7d0a 6px, transparent 7px) no-repeat; }
  .selected {
    position: relative;
    overflow: visible;
    border-color: transparent;
    outline: 2px solid #217346;
    outline-offset: -1px;
    box-shadow: inset 0 0 0 2px #fff;
  }
  .selected::after {
    content: "";
    position: absolute;
    right: -3px;
    bottom: -3px;
    width: 6px;
    height: 6px;
    background: #217346;
    border: solid #cce8cf;
    border-width: 1px 0 0 1px;
  }
  .diagram { position: absolute; left: 1089px; top: 89px; }
  .diagram text { font: 18px "Liberation Sans", sans-serif; fill: #000; stroke: none; }
  .diagram .cn { font: 14px "Noto Sans CJK SC", sans-serif; }

  /* floating level meter docked on the left edge */
  .meter {
    position: absolute;
    left: 0;
    top: 459px;
    width: 16px;
    height: 89px;
    border-radius: 0 5px 5px 0;
    background:
      repeating-linear-gradient(#8fc46a 0 2px, transparent 2px 3px) 3px 49px / 6px 12px no-repeat,
      repeating-linear-gradient(#4fc0a0 0 2px, transparent 2px 3px) 3px 61px / 6px 18px no-repeat,
      repeating-linear-gradient(#2f333e 0 2px, transparent 2px 4px) 4px 10px / 6px 38px no-repeat,
      #4b4f5d;
    box-shadow: 0 1px 1px #555;
  }

  .vscroll { width: 30px; display: flex; flex-direction: column; padding: 1px 3px 0 2px; }
  .vscroll button { height: 25px; background: #fff; border: 1px solid #777; }
  .vscroll .thumb { flex: 608; background: #fff; border: 1px solid #999; border-top: 0; }
  .track { flex: 365; background: #dadada; }

  /* bottom bars */
  .sheet-tabs { height: 33px; flex: none; display: flex; border-bottom: 1px solid #bdbdbd; }
  .arrows { display: flex; gap: 27px; padding-left: 28px; width: 115px; }
  .sheet-tab {
    width: 264px;
    height: 30px;
    margin-top: -1px;
    padding-bottom: 2px;
    background: #fff;
    border: 1px solid #9b9b9b;
    border-top: 0;
    border-bottom: 2px solid #217346;
    color: #217346;
    font-size: 20px;
    position: relative;
  }
  .add { margin-left: 37px; }
  .sheet-tabs .dots { margin: 9px 18px 0 auto; }
  .hscroll { width: 597px; height: 25px; margin: 4px 28px 0 0; display: flex; background: #dadada; }
  .hscroll button { width: 26px; background: #fff; border: 1px solid #777; }
  .hscroll .thumb { flex: 1; margin-right: 30px; margin-left: -1px; background: #fff; border: 1px solid #777; border-left-width: 2px; }
  .status {
    position: relative;
    height: 33px;
    flex: none;
    display: flex;
    align-items: center;
    padding: 0 12px 2px 10px;
    background: #f3f3f3;
  }
  .access { margin-left: 30px; gap: 3px; }
  .views { display: flex; height: 31px; margin-left: auto; }
  .views button { width: 60px; }
  .on { background: #c6c6c6; }
  .zoom { display: flex; align-items: center; gap: 7px; margin-left: 8px; }
  .zoom button { width: 12px; }
  .zoom .percent { width: 60px; text-align: right; }
  .zoom input {
    width: 150px;
    height: 18px;
    margin: 0;
    appearance: none;
    background: linear-gradient(#333, #333) center / 100% 2px no-repeat;
  }
  .zoom input::-webkit-slider-thumb { appearance: none; width: 8px; height: 18px; background: #666; }
  /* blog stamp lies over the zoom control */
  .mark { position: absolute; right: 14px; bottom: 6px; color: rgba(130, 130, 130, 0.85); font: 300 20px/24px "Noto Sans CJK SC", sans-serif; }
</style>
